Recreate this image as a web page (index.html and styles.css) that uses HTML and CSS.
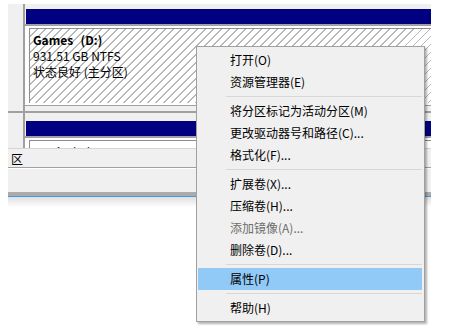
FILE: index.html
```html
<!DOCTYPE html>
<html lang="zh-CN">
<head>
<meta charset="utf-8">
<link rel="stylesheet" href="styles.css">
</head>
<body>
<div class="screen">
  <div class="window">
    <div class="disk disk1">
      <div class="disk-label"></div>
      <div class="disk-vols">
        <div class="vol-bar"></div>
        <div class="vol">
          <div class="vol-inner hatch">
            <div class="vol-name">Games&nbsp; (D:)</div>
            <div>931.51 GB NTFS</div>
            <div>状态良好 (主分区)</div>
          </div>
        </div>
      </div>
    </div>
    <div class="disk disk2">
      <div class="disk-label"></div>
      <div class="disk-vols">
        <div class="vol-bar"></div>
        <div class="vol">
          <div class="vol-inner">
            <div class="vol-name">Work&nbsp; (F:)</div>
          </div>
        </div>
      </div>
    </div>
    <div class="legend"><span class="legend-text">区</span></div>
    <div class="footer"></div>
  </div>
  <div class="shade"></div>

  <ul class="menu">
    <li class="item">打开(O)</li>
    <li class="item">资源管理器(E)</li>
    <li class="sep"></li>
    <li class="item">将分区标记为活动分区(M)</li>
    <li class="item">更改驱动器号和路径(C)...</li>
    <li class="item">格式化(F)...</li>
    <li class="sep"></li>
    <li class="item">扩展卷(X)...</li>
    <li class="item">压缩卷(H)...</li>
    <li class="item disabled">添加镜像(A)...</li>
    <li class="item">删除卷(D)...</li>
    <li class="sep"></li>
    <li class="item active">属性(P)</li>
    <li class="sep"></li>
    <li class="item">帮助(H)</li>
  </ul>
</div>
</body>
</html>
```

FILE: styles.css
```css
* { box-sizing: border-box; }
html, body { margin: 0; padding: 0; background: #ffffff; }
body {
  font-family: "Noto Sans CJK SC", "Noto Sans", sans-serif;
  font-size: 12px;
  color: #000;
}
.screen {
  position: relative;
  width: 462px;
  height: 335px;
  overflow: hidden;
  padding-top: 4px;
}
.window {
  margin-left: 8px;
  width: 423px;
  background: #f0f0f0;
}
.disk {
  display: flex;
  border-bottom: 2px solid #a0a0a0;
  overflow: hidden;
}
.disk1 { height: 109px; }
.disk2 { height: 35px; border-bottom: 0; }
.disk-label {
  width: 17px;
  border-right: 2px solid #a0a0a0;
  background: #f0f0f0;
}
.disk-vols {
  flex: 1;
  padding-top: 5px;
}
.disk2 .disk-vols { padding-top: 8px; }
.vol-bar {
  height: 15px;
  margin-left: 1px;
  background: #000080;
}
.vol {
  background: #ffffff;
  border-top: 2px solid #a0a0a0;
  border-bottom: 1px solid #a0a0a0;
  padding: 2px 0 2px 4px;
}
.vol-inner {
  height: 75px;
  border-left: 1px solid #8c8c8c;
  border-top: 1px solid #8c8c8c;
  padding: 3px 0 0 3px;
  line-height: 16px;
  white-space: nowrap;
}
.hatch {
  background: repeating-linear-gradient(135deg, #ffffff 0, #ffffff 4.8px, #b8b8b8 4.8px, #b8b8b8 5.66px);
}
.vol-name { font-weight: bold; word-spacing: 1px; }
.legend {
  height: 20px;
  background: #f0f0f0;
  border-bottom: 1px solid #a0a0a0;
  padding-left: 3px;
  line-height: 19px;
  border-top: 1px solid #d6d6d6;
}
.legend-text { font-size: 12px; }
.footer {
  height: 28px;
  background: #f0f0f0;
  border-top: 1px solid #ffffff;
  border-bottom: 4px solid #ababab;
  box-shadow: 0 1px 0 #4a97e8;
}
.shade {
  margin-left: 8px;
  margin-top: 1px;
  width: 423px;
  height: 10px;
  background: linear-gradient(rgba(0,0,0,0.13), rgba(0,0,0,0));
}
.menu {
  position: absolute;
  left: 196px;
  top: 46px;
  width: 229px;
  margin: 0;
  padding: 2px 2px 2px 1px;
  list-style: none;
  background: #f0f0f0;
  border: 1px solid #a0a0a0;
  box-shadow: 2px 2px 2px rgba(0,0,0,0.3);
}
.item {
  height: 22px;
  line-height: 22px;
  padding-left: 32px;
  white-space: nowrap;
}
.item.disabled { color: #6d6d6d; }
.item.active { background: #91c9f7; }
.sep {
  height: 7px;
  margin-left: 28px;
  background: linear-gradient(#d7d7d7, #d7d7d7) 0 3px / 100% 1px no-repeat;
}
```
